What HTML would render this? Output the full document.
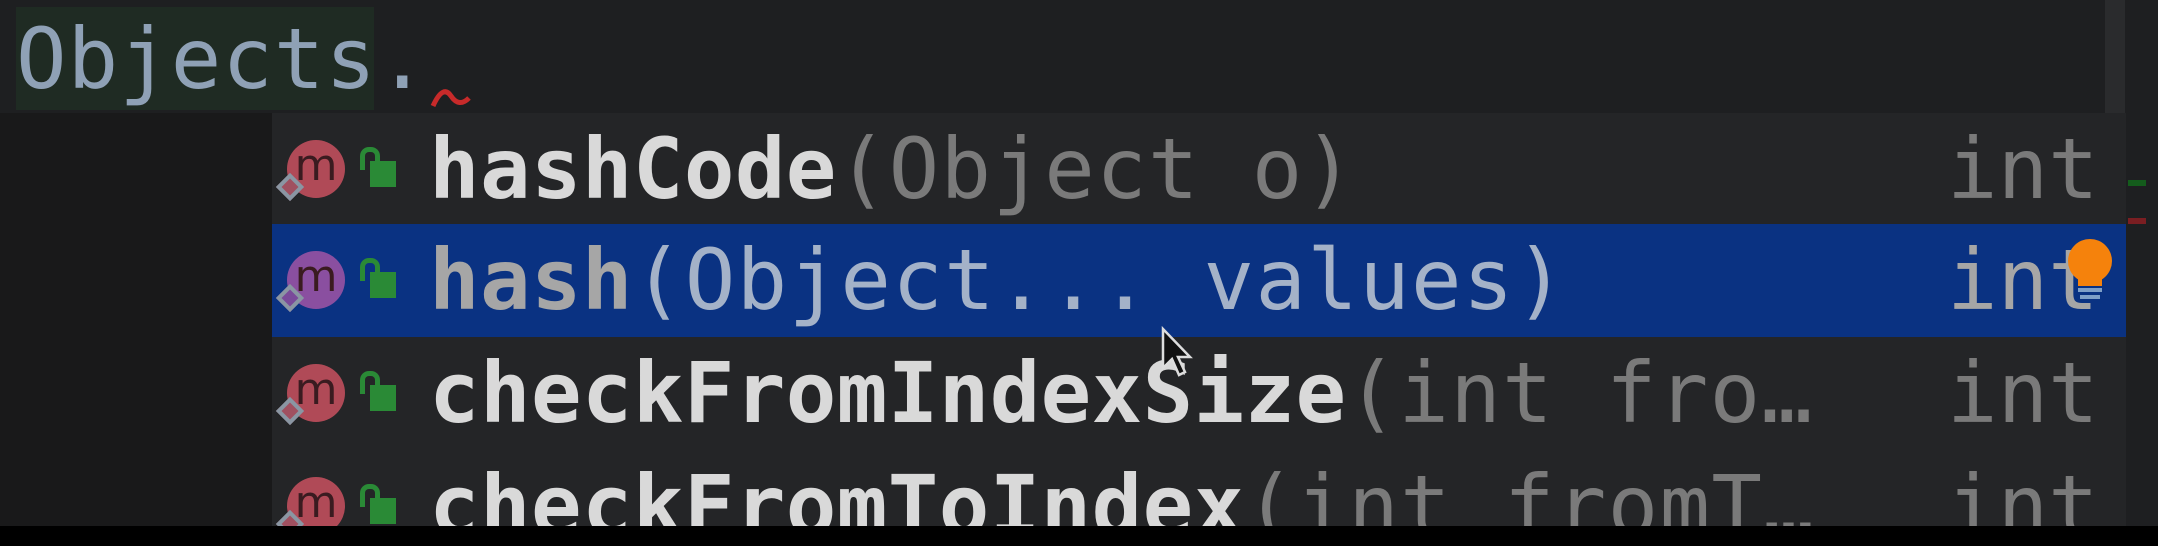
<!DOCTYPE html>
<html style="width:2158px;height:546px;overflow:hidden;margin:0"><head><style>
body{margin:0;width:2158px;height:546px;background:#1e1f21;position:relative;overflow:hidden;font-family:"DejaVu Sans Mono","Liberation Mono",monospace;}
.abs{position:absolute}
.row{position:absolute;left:272px;width:1854px;height:113px}
.t{position:absolute;left:157px;top:0;line-height:113px;font-size:84px;white-space:pre;letter-spacing:0.4px}
.b{font-weight:bold;color:#d9d9d9}
.p,.q{letter-spacing:1.3px}
.p{color:#7a7a7a}
.int{position:absolute;left:1675px;line-height:113px;font-size:84px;color:#7a7a7a}
.m{position:absolute;left:15px;top:27px;width:58px;height:58px;border-radius:50%;background:#b04a57;color:#3a1b20;font-family:"DejaVu Sans",sans-serif;font-size:44px;line-height:52px;text-align:center}
.d{position:absolute;left:8px;top:64px;width:12px;height:12px;border:4px solid #8a96a3;transform:rotate(45deg);background:#a05060}
.lk{position:absolute;left:98px;top:48px;width:26px;height:26px;background:#2a8a36}
.sh{position:absolute;left:88px;top:34px;width:10px;height:18px;border:5px solid #2a8a36;border-bottom:none;border-radius:9px 9px 0 0}
</style></head><body>
<div class="abs" style="left:0;top:113px;width:272px;height:413px;background:#19191a"></div>
<div class="abs" style="left:16px;top:7px;width:358px;height:103px;background:#1f2b23"></div>
<div class="abs" style="left:16px;top:0;line-height:118px;font-size:84px;color:#8fa1b6;letter-spacing:1px;white-space:pre">Objects.</div>
<svg class="abs" style="left:425px;top:86px" width="52" height="24"><path d="M8 20 Q18 -2 26 10 T44 12" stroke="#c72a2a" stroke-width="5" fill="none"/></svg>
<div class="abs" style="left:2105px;top:0;width:20px;height:526px;background:#2a2b2d"></div>
<div class="abs" style="left:272px;top:113px;width:1854px;height:413px;background:#242527"></div>
<div class="abs" style="left:2128px;top:180px;width:18px;height:6px;background:#145c1c"></div>
<div class="abs" style="left:2128px;top:218px;width:18px;height:6px;background:#7a1e22"></div>

<div class="row" style="top:113px">
 <div class="m">m</div><div class="d"></div><div class="sh"></div><div class="lk"></div>
 <div class="t"><span class="b">hashCode</span><span class="p">(Object o)</span></div>
 <div class="int">int</div>
</div>
<div class="row" style="top:224px;background:#0a3282">
 <div class="m" style="background:#8a4fa0">m</div><div class="d" style="background:#7a4a9a"></div><div class="sh"></div><div class="lk"></div>
 <div class="t"><span class="b" style="color:#a6a6a6">hash</span><span class="q" style="color:#a4b2c8">(Object... values)</span></div>
 <div class="int" style="color:#a6a6a6">int</div>
 <div class="abs" style="left:1796px;top:15px;width:44px;height:44px;border-radius:50%;background:#f5820c"></div>
 <div class="abs" style="left:1806px;top:50px;width:24px;height:12px;background:#f5820c"></div>
 <div class="abs" style="left:1806px;top:64px;width:24px;height:4px;background:#7fa0c8"></div>
 <div class="abs" style="left:1808px;top:71px;width:20px;height:4px;background:#7fa0c8"></div>
</div>
<div class="row" style="top:337px">
 <div class="m">m</div><div class="d"></div><div class="sh"></div><div class="lk"></div>
 <div class="t"><span class="b">checkFromIndexSize</span><span class="p">(int fro…</span></div>
 <div class="int">int</div>
</div>
<div class="row" style="top:450px">
 <div class="m">m</div><div class="d"></div><div class="sh"></div><div class="lk"></div>
 <div class="t"><span class="b">checkFromToIndex</span><span class="p">(int fromT…</span></div>
 <div class="int">int</div>
</div>
<svg class="abs" style="left:1160px;top:326px" width="36" height="56"><path d="M3 3 L3 42 L12 33 L19 49 L25 46 L18 31 L30 31 Z" fill="#111" stroke="#ddd" stroke-width="2.5"/></svg>
<div class="abs" style="left:0;top:526px;width:2158px;height:20px;background:#000"></div>
</body></html>
